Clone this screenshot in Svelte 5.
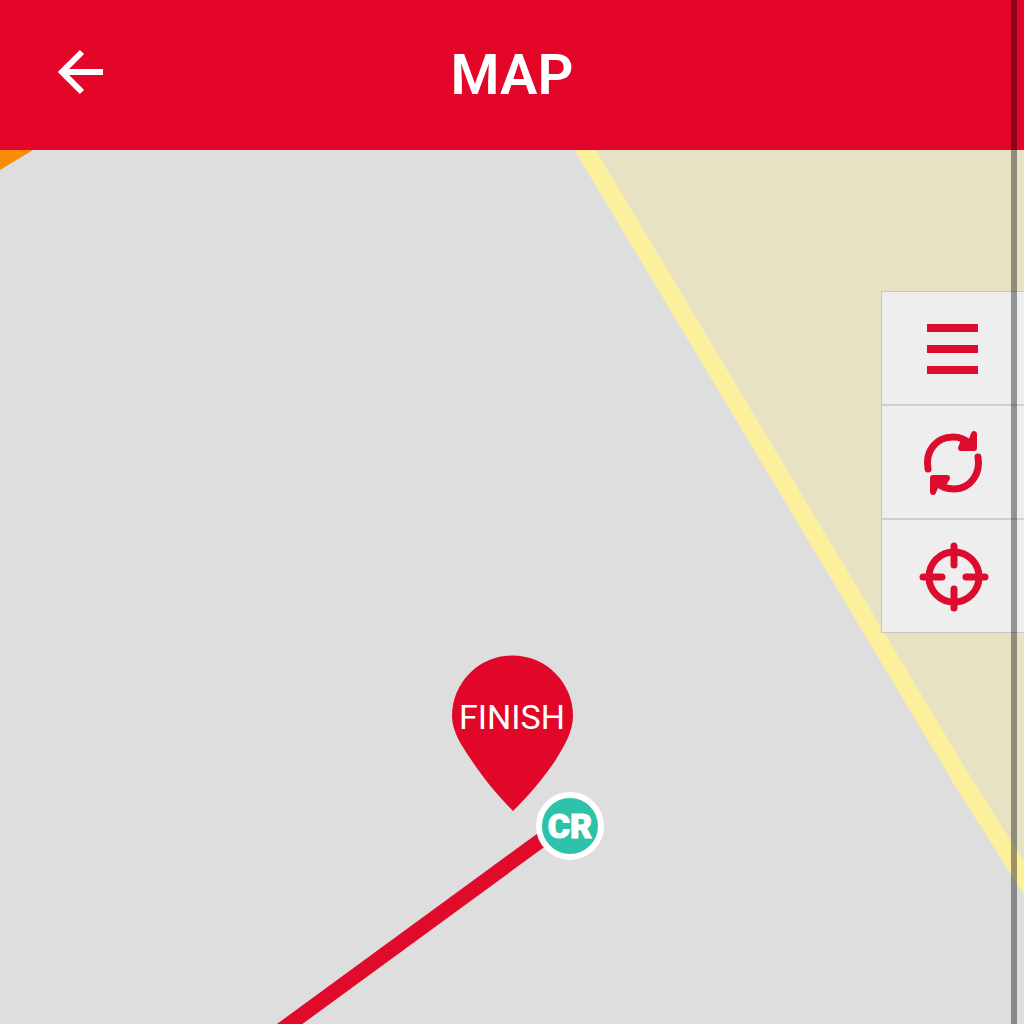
<script>
	// Map drawing and its markers share one coordinate space
	const finish = { x: 512, y: 566, label: 'FINISH' };
	const runner = { x: 570, y: 676, label: 'CR' };
</script>

<div class="screen">
	<header class="topbar">
		<button class="back" aria-label="Back">
			<svg viewBox="0 0 48 48" width="48" height="48">
				<path d="M26 4 L6 24 L26 44 M7 24 H47" />
			</svg>
		</button>
		<h1>MAP</h1>
	</header>

	<main class="map">
		<svg class="canvas" viewBox="0 0 1024 874" preserveAspectRatio="xMidYMin slice">
			<rect width="1024" height="874" fill="#dedede" />
			<path d="M585 0 L962 630 L1024 728 V0 Z" fill="#e8e2c5" />
			<path d="M573 -20 L962 630 L1036 747" fill="none" stroke="#fdf09d" stroke-width="18" />
			<path d="M0 0 H33 L0 20 Z" fill="#fb8c0a" />

			<!-- Course -->
			<path d="M265 892 L570 669" fill="none" stroke="#e00a2b" stroke-width="15" />

			<!-- Finish pin -->
			<g transform="translate({finish.x} {finish.y})">
				<path
					d="M1 95 C-10 84 -26 66 -40 45 C-51 29 -60 15 -60 0 A60 60 0 0 1 61 0 C61 15 53 29 43 45 C29 66 12 84 1 95 Z"
					fill="#e00728"
				/>
				<text class="pin-label" y="13">{finish.label}</text>
			</g>

			<!-- Runner position -->
			<g transform="translate({runner.x} {runner.y})">
				<circle r="31" fill="#2fc1a9" stroke="#fff" stroke-width="6" />
				<text class="runner-label" y="12">{runner.label}</text>
			</g>
		</svg>

		<nav class="tools" aria-label="Map tools">
			<button aria-label="Menu">
				<svg viewBox="0 0 72 72" width="72" height="72">
					<path d="M10 16 H61 M10 37 H61 M10 58 H61" stroke-width="8" />
				</svg>
			</button>
			<button aria-label="Refresh">
				<svg viewBox="0 0 72 72" width="72" height="72">
					<g stroke-width="7" stroke-linecap="round" stroke-linejoin="round">
						<path d="M11 43 C8 25 19 11 36 11 C43 11 48 13 53 18" />
						<path d="M61 31 C64 48 53 63 37 63 C30 63 24 61 19 56" />
						<path class="head" d="M57 8 V22 H44 L46 17 L54 16 Z" />
						<path class="head" d="M16 66 V52 H30 L27 57 L19 59 Z" />
					</g>
				</svg>
			</button>
			<button aria-label="Locate">
				<svg viewBox="0 0 72 72" width="72" height="72">
					<g stroke-width="7" stroke-linecap="round">
						<circle cx="37" cy="37" r="25" />
						<path d="M37 6 V25 M37 49 V68 M6 37 H25 M49 37 H68" />
					</g>
				</svg>
			</button>
		</nav>
	</main>

	<div class="scroll-track"></div>
</div>

<style>
	:global(body) {
		margin: 0;
	}

	.screen {
		position: relative;
		display: flex;
		flex-direction: column;
		min-height: 100vh;
		overflow: hidden;
		font-family: Roboto, 'Liberation Sans', sans-serif;
	}

	.topbar {
		display: grid;
		grid-template-columns: 160px 1fr 160px;
		align-items: center;
		height: 150px;
		background: #e40628;
		color: #fff;
	}

	.topbar h1 {
		margin: 0;
		font-size: 56px;
		line-height: 64px;
		font-weight: 600;
		text-align: center;
	}

	button {
		display: flex;
		align-items: center;
		justify-content: center;
		padding: 0;
		border: 0;
		background: none;
		cursor: pointer;
	}

	.back {
		height: 144px;
		margin-bottom: 6px;
	}

	.back svg {
		fill: none;
		stroke: #fff;
		stroke-width: 6;
	}

	.map {
		position: relative;
		display: flex;
		flex: 1;
		background: #dedede;
	}

	.canvas {
		position: absolute;
		width: 100%;
		height: 100%;
	}

	.canvas text {
		fill: #fff;
		font-size: 34px;
		text-anchor: middle;
	}

	.canvas .runner-label {
		font-weight: 900;
		stroke: #fff;
		stroke-width: 1px;
	}

	/* Floats over the map, flush with the right side */
	.tools {
		position: absolute;
		top: 141px;
		right: 0;
		display: flex;
		flex-direction: column;
		width: 142px;
		border: 1px solid #c6c6c6;
		border-right: 0;
		background: #eee;
	}

	.tools button {
		box-sizing: content-box;
		height: 112px;
	}

	.tools button + button {
		border-top: 2px solid #cfcfcf;
	}

	.tools svg {
		fill: none;
		stroke: #dc0c2e;
	}

	.tools .head {
		fill: #dc0c2e;
		stroke-width: 6;
	}

	.scroll-track {
		position: absolute;
		top: 0;
		right: 7px;
		bottom: 0;
		width: 6px;
		background: rgba(0, 0, 0, 0.38);
		pointer-events: none;
	}
</style>
